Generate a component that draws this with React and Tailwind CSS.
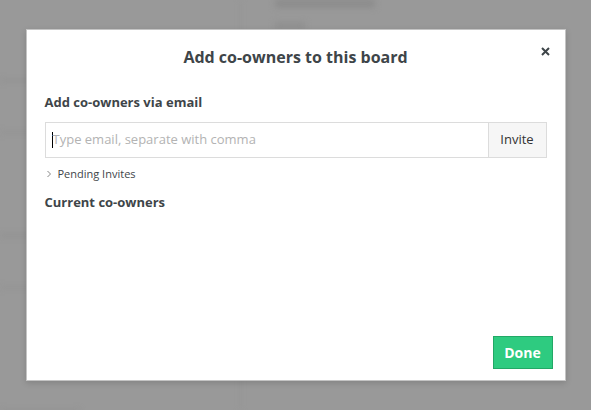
export default function App() {
  return (
    <div className="relative w-[591px] h-[410px] overflow-hidden bg-[#999999]" style={{ fontFamily: '"Open Sans", "Noto Sans", sans-serif' }}>
      {/* blurred page behind the modal */}
      <div className="flex h-full w-full blur-[3px]">
        <div className="flex w-[240px] flex-col pt-[80px] gap-[52px]">
          <div className="h-[6px] w-[60px] bg-[#808080]" />
          <div className="h-[6px] w-[40px] bg-[#858585]" />
          <div className="h-[8px] w-[120px] bg-[#7c7c7c] mt-[50px]" />
          <div className="h-[6px] w-[60px] bg-[#858585]" />
          <div className="h-[8px] w-[80px] bg-[#808080] mt-[70px]" />
        </div>
        <div className="w-[1px] h-full bg-[#8f8f8f]" />
        <div className="flex flex-col pl-[34px] gap-[16px]">
          <div className="h-[7px] w-[100px] bg-[#8a8a8a]" />
          <div className="h-[5px] w-[30px] bg-[#8c8c8c]" />
        </div>
      </div>
      {/* modal overlay */}
      <div className="absolute inset-0 flex items-center justify-center">
        <div className="relative flex w-[540px] h-[352px] flex-col border border-[#c4c4c4] bg-white shadow-[0_2px_6px_rgba(0,0,0,0.15)]">
          <div className="flex h-[54px] items-center justify-center">
            <h1 className="text-[16px] font-bold text-[#3e4549]">Add co-owners to this board</h1>
          </div>
          <button className="absolute right-[12px] top-[14px] flex h-[14px] w-[14px] items-center justify-center text-[#3e4549]">
            <svg width="9" height="9" viewBox="0 0 9 9"><path d="M1 1L8 8M8 1L1 8" stroke="currentColor" strokeWidth="2" /></svg>
          </button>
          <div className="flex flex-1 flex-col px-[18px]">
            <div className="mt-[9px] text-[13px] font-bold text-[#3e4549] leading-[18px]">Add co-owners via email</div>
            <div className="mt-[11px] flex h-[36px]">
              <div className="flex flex-1 items-center border border-[#dcdcdc] pl-[6px]">
                <span className="h-[16px] w-[1px] bg-black" />
                <span className="text-[13px] text-[#b3b3b3]">Type email, separate with comma</span>
              </div>
              <button className="w-[58px] border border-l-0 border-[#dcdcdc] bg-[#f6f6f6] text-[13px] text-[#333]">Invite</button>
            </div>
            <div className="mt-[8px] flex items-center gap-[6px] pl-[1px] text-[11px] text-[#3e4549] leading-[16px]">
              <svg width="6" height="8" viewBox="0 0 6 8"><path d="M1.5 1L4.5 4L1.5 7" fill="none" stroke="#888" strokeWidth="1" /></svg>
              <span>Pending Invites</span>
            </div>
            <div className="mt-[11px] text-[13px] font-bold text-[#3e4549] leading-[18px]">Current co-owners</div>
            <div className="flex-1" />
            <div className="mb-[11px] -mr-[6px] flex justify-end">
              <button className="h-[33px] w-[60px] border border-[#22a866] bg-[#2ecb80] text-[14px] font-bold text-white">Done</button>
            </div>
          </div>
        </div>
      </div>
    </div>
  );
}
